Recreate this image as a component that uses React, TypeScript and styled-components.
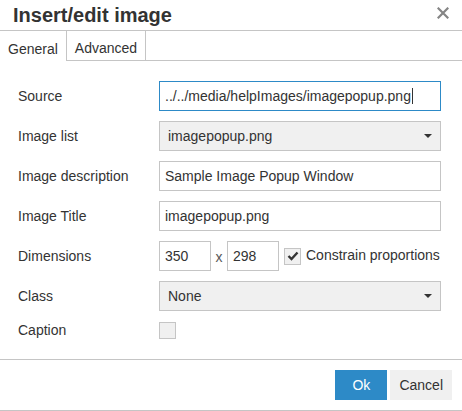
import React from "react";
import styled, { createGlobalStyle } from "styled-components";

const GlobalStyle = createGlobalStyle`
  html, body {
    margin: 0;
    padding: 0;
    background: #fff;
  }
  body {
    font-family: "Liberation Sans", Arial, sans-serif;
    font-size: 14px;
    color: #333;
  }
`;

const Dialog = styled.div`
  width: 462px;
  background: #fff;
  border-bottom: 1px solid #c5c5c5;
`;

const Header = styled.div`
  height: 30px;
  display: flex;
  align-items: center;
  justify-content: space-between;
  padding: 0 13px 0 13px;
  border-bottom: 1px solid #c5c5c5;
`;

const Title = styled.h1`
  margin: 0;
  font-size: 20px;
  font-weight: bold;
  line-height: 24px;
  color: #333;
  margin-top: -1px;
`;

const CloseButton = styled.button`
  border: 0;
  background: none;
  padding: 0;
  width: 12px;
  height: 12px;
  display: flex;
  margin-top: -4px;
  cursor: pointer;
`;

const TabBar = styled.div`
  display: flex;
  height: 29px;
  border-bottom: 1px solid #c5c5c5;
`;

const Tab = styled.div<{ $active?: boolean }>`
  padding: 5px 8px 0;
  display: flex;
  align-items: center;
  border-right: 1px solid #c5c5c5;
  background: #fff;
  height: ${(p) => (p.$active ? "25px" : "24px")};
  margin-bottom: ${(p) => (p.$active ? "-1px" : "0")};
  color: #333;
  cursor: pointer;
`;

const Body = styled.div`
  padding: 20px 21px 20px 18px;
  display: grid;
  grid-template-columns: 141px 1fr;
  row-gap: 10px;
  align-items: center;
`;

const Label = styled.label`
  line-height: 18px;
`;

const Field = styled.div<{ $focused?: boolean; $width?: number }>`
  box-sizing: border-box;
  height: 30px;
  width: ${(p) => (p.$width ? `${p.$width}px` : "100%")};
  border: 1px solid ${(p) => (p.$focused ? "#2d8ac7" : "#c5c5c5")};
  padding: 0 5px;
  display: flex;
  align-items: center;
  white-space: nowrap;
  overflow: hidden;
  color: #333;
`;

const Caret = styled.span`
  display: inline-block;
  width: 1px;
  height: 16px;
  background: #333;
  margin-left: 1px;
`;

const Select = styled.div`
  box-sizing: border-box;
  height: 30px;
  width: 100%;
  border: 1px solid #c5c5c5;
  background: #f0f0f0;
  padding: 0 8px;
  display: flex;
  align-items: center;
  justify-content: space-between;
  color: #333;
`;

const Arrow = styled.span`
  width: 0;
  height: 0;
  border-left: 4px solid transparent;
  border-right: 4px solid transparent;
  border-top: 4px solid #333;
`;

const Inline = styled.div`
  display: flex;
  align-items: center;
`;

const Times = styled.span`
  width: 16px;
  text-align: center;
  color: #595959;
  font-size: 14px;
  padding-top: 2px;
`;

const CheckBox = styled.span<{ $gap?: number }>`
  box-sizing: border-box;
  width: 17px;
  height: 17px;
  margin-left: ${(p) => p.$gap ?? 0}px;
  border: 1px solid #c5c5c5;
  background: #f0f0f0;
  display: inline-flex;
  align-items: center;
  justify-content: center;
`;

const CheckLabel = styled.span`
  margin-left: 5px;
  white-space: nowrap;
  margin-top: -2px;
`;

const Footer = styled.div`
  display: flex;
  justify-content: flex-end;
  gap: 3px;
  padding: 10px 10px 10px;
  border-top: 1px solid #c5c5c5;
`;

const Button = styled.button<{ $primary?: boolean }>`
  height: 30px;
  min-width: ${(p) => (p.$primary ? "52px" : "0")};
  padding: 0 9px;
  border: 0;
  font-family: inherit;
  font-size: 14px;
  background: ${(p) => (p.$primary ? "#2d8ac7" : "#f0f0f0")};
  color: ${(p) => (p.$primary ? "#fff" : "#333")};
  cursor: pointer;
`;

const CloseIcon = () => (
  <svg width="12" height="12" viewBox="0 0 12 12">
    <path d="M1.5 1.5 L10.5 10.5 M10.5 1.5 L1.5 10.5" stroke="#858585" strokeWidth="2.2" strokeLinecap="square" />
  </svg>
);

const CheckIcon = () => (
  <svg width="12" height="10" viewBox="0 0 12 10">
    <path d="M1.5 5 L4.5 8 L10.5 1.5" stroke="#333" strokeWidth="2.4" fill="none" />
  </svg>
);

export default function App() {
  return (
    <>
      <GlobalStyle />
      <Dialog>
        <Header>
          <Title>Insert/edit image</Title>
          <CloseButton aria-label="Close">
            <CloseIcon />
          </CloseButton>
        </Header>
        <TabBar>
          <Tab $active>General</Tab>
          <Tab>Advanced</Tab>
        </TabBar>
        <Body>
          <Label>Source</Label>
          <Field $focused>
            ../../media/helpImages/imagepopup.png
            <Caret />
          </Field>

          <Label>Image list</Label>
          <Select>
            imagepopup.png
            <Arrow />
          </Select>

          <Label>Image description</Label>
          <Field>Sample Image Popup Window</Field>

          <Label>Image Title</Label>
          <Field>imagepopup.png</Field>

          <Label>Dimensions</Label>
          <Inline>
            <Field $width={52}>350</Field>
            <Times>x</Times>
            <Field $width={52}>298</Field>
            <CheckBox $gap={5}>
              <CheckIcon />
            </CheckBox>
            <CheckLabel>Constrain proportions</CheckLabel>
          </Inline>

          <Label>Class</Label>
          <Select>
            None
            <Arrow />
          </Select>

          <Label>Caption</Label>
          <Inline>
            <CheckBox />
          </Inline>
        </Body>
        <Footer>
          <Button $primary>Ok</Button>
          <Button>Cancel</Button>
        </Footer>
      </Dialog>
    </>
  );
}
